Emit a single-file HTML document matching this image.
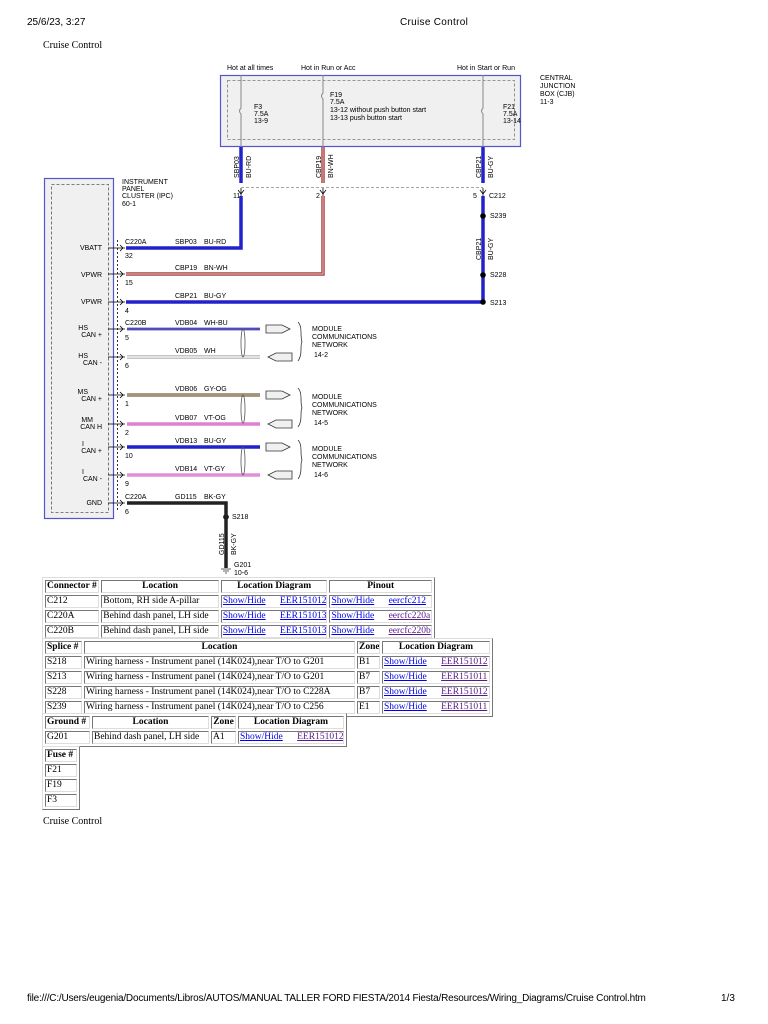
<!DOCTYPE html>
<html><head><meta charset="utf-8">
<style>
body{margin:0;width:768px;height:1024px;background:#fff;position:relative;overflow:hidden;font-family:"Liberation Sans",sans-serif;}
.a{position:absolute;white-space:nowrap;}
table{position:absolute;table-layout:fixed;border-collapse:separate;border-spacing:2px;border:1px solid #888;border-color:#ddd #777 #777 #ddd;font-family:"Liberation Serif",serif;font-size:9.5px;background:#fff;}
td,th{border:1px solid #888;border-color:#777 #ddd #ddd #777;padding:0 1px;height:11px;line-height:11px;white-space:nowrap;overflow:hidden;text-align:left;}
th{text-align:center;font-weight:bold;}
a{color:#00e;text-decoration:underline;}
a.v{color:#551a8b;}
.sp{margin-left:12px}
</style></head><body>
<div class="a" style="left:27px;top:17px;font-size:10px;">25/6/23, 3:27</div>
<div class="a" style="left:400px;top:17px;font-size:10px;letter-spacing:0.3px">Cruise Control</div>
<div class="a" style="left:43px;top:40px;font-size:10px;font-family:'Liberation Serif',serif">Cruise Control</div>

<svg class="a" style="left:0;top:0" width="768" height="580" font-family="Liberation Sans, sans-serif" font-size="7">
<rect x="220.5" y="75.5" width="300" height="71" fill="#f0f0f0" stroke="#5555cc" stroke-width="1.2"/>
<rect x="227.5" y="80.5" width="287" height="59" fill="none" stroke="#777" stroke-dasharray="3,2" stroke-width="0.8"/>
<text x="227" y="70">Hot at all times</text>
<text x="301" y="70">Hot in Run or Acc</text>
<text x="457" y="70">Hot in Start or Run</text>
<text x="540" y="80">CENTRAL</text><text x="540" y="88">JUNCTION</text><text x="540" y="96">BOX (CJB)</text><text x="540" y="104">11-3</text>
<g stroke="#888" stroke-width="1" fill="none">
<path d="M241 75V108 q-3 3 0 6 V147"/><path d="M323 75V93 q-3 3 0 6 V147"/><path d="M483 75V108 q-3 3 0 6 V147"/>
</g>
<text x="254" y="109">F3</text><text x="254" y="116">7.5A</text><text x="254" y="123">13-9</text>
<text x="330" y="97">F19</text><text x="330" y="104">7.5A</text><text x="330" y="112">13-12 without push button start</text><text x="330" y="120">13-13 push button start</text>
<text x="503" y="109">F21</text><text x="503" y="116">7.5A</text><text x="503" y="123">13-14</text>
<line x1="241" y1="187.5" x2="483" y2="187.5" stroke="#888" stroke-dasharray="3,2" stroke-width="0.8"/>
<path d="M241 147V183" stroke="#2222cc" stroke-width="3.5"/>
<path d="M323 147V183" stroke="#aa4444" stroke-width="3.5"/><path d="M323 147V183" stroke="#e0b0b0" stroke-width="1"/>
<path d="M483 147V183" stroke="#2222cc" stroke-width="3.5"/>
<g font-size="7">
<text transform="translate(239,178) rotate(-90)">SBP03</text><text transform="translate(251,178) rotate(-90)">BU-RD</text>
<text transform="translate(321,178) rotate(-90)">CBP19</text><text transform="translate(333,178) rotate(-90)">BN-WH</text>
<text transform="translate(481,178) rotate(-90)">CBP21</text><text transform="translate(493,178) rotate(-90)">BU-GY</text>
<text transform="translate(481,260) rotate(-90)">CBP21</text><text transform="translate(493,260) rotate(-90)">BU-GY</text>
</g>
<g stroke="#000" fill="none" stroke-width="0.8"><path d="M238 190l3 4 3-4M241 188v8"/><path d="M320 190l3 4 3-4M323 188v8"/><path d="M480 190l3 4 3-4M483 188v8"/></g>
<text x="233" y="198">11</text><text x="316" y="198">2</text><text x="473" y="198">5</text><text x="489" y="198">C212</text>
<rect x="44.5" y="178.5" width="69" height="340" fill="#f0f0f0" stroke="#5555cc" stroke-width="1.2"/>
<rect x="51.5" y="184.5" width="57" height="328" fill="none" stroke="#555" stroke-dasharray="3,2" stroke-width="0.8"/>
<line x1="117.5" y1="240" x2="117.5" y2="512" stroke="#000" stroke-dasharray="2,2" stroke-width="0.8"/>
<text x="122" y="184">INSTRUMENT</text><text x="122" y="191">PANEL</text><text x="122" y="198">CLUSTER (IPC)</text><text x="122" y="206">60-1</text>
<g text-anchor="end">
<text x="102" y="250">VBATT</text><text x="102" y="277">VPWR</text><text x="102" y="304">VPWR</text>
<text x="88" y="330">HS</text><text x="102" y="337">CAN +</text>
<text x="88" y="358">HS</text><text x="102" y="365">CAN -</text>
<text x="88" y="394">MS</text><text x="102" y="401">CAN +</text>
<text x="93" y="422">MM</text><text x="102" y="429">CAN H</text>
<text x="84" y="446">I</text><text x="102" y="453">CAN +</text>
<text x="84" y="474">I</text><text x="102" y="481">CAN -</text>
<text x="102" y="505">GND</text>
</g>
<g stroke="#000" fill="none" stroke-width="0.8">
<path d="M108 248h17M120 245l3 3-3 3"/><path d="M108 274h17M120 271l3 3-3 3"/><path d="M108 302h17M120 299l3 3-3 3"/>
<path d="M108 329h17M120 326l3 3-3 3"/><path d="M108 357h17M120 354l3 3-3 3"/><path d="M108 395h17M120 392l3 3-3 3"/>
<path d="M108 424h17M120 421l3 3-3 3"/><path d="M108 447h17M120 444l3 3-3 3"/><path d="M108 475h17M120 472l3 3-3 3"/>
<path d="M108 503h17M120 500l3 3-3 3"/>
</g>
<path d="M126 248H241V196" stroke="#2222cc" stroke-width="3.5" fill="none"/>
<path d="M126 274H323V196" stroke="#aa4444" stroke-width="3.5" fill="none"/><path d="M126 274H323V196" stroke="#e8c0c0" stroke-width="1" fill="none"/>
<path d="M126 302H483V196" stroke="#2222cc" stroke-width="3.5" fill="none"/>
<g fill="#000"><circle cx="483" cy="216" r="2.8"/><circle cx="483" cy="275" r="2.8"/><circle cx="483" cy="302" r="2.8"/><circle cx="226" cy="517" r="2.8"/></g>
<text x="490" y="218">S239</text><text x="490" y="277">S228</text><text x="490" y="305">S213</text>
<text x="125" y="244">C220A</text><text x="175" y="244">SBP03</text><text x="204" y="244">BU-RD</text><text x="125" y="258">32</text>
<text x="175" y="270">CBP19</text><text x="204" y="270">BN-WH</text><text x="125" y="285">15</text>
<text x="175" y="298">CBP21</text><text x="204" y="298">BU-GY</text><text x="125" y="313">4</text>
<path d="M127 329H260" stroke="#7777cc" stroke-width="3"/><path d="M127 329H260" stroke="#2222aa" stroke-width="1"/>
<path d="M127 357H260" stroke="#888" stroke-width="3"/><path d="M127 357H260" stroke="#fff" stroke-width="1.6"/>
<path d="M127 395H260" stroke="#8a7a60" stroke-width="3.5"/><path d="M127 395H260" stroke="#c0b090" stroke-width="1"/>
<path d="M127 424H260" stroke="#e080d0" stroke-width="3.5"/>
<path d="M127 447H260" stroke="#2222cc" stroke-width="3.5"/>
<path d="M127 475H260" stroke="#e090d8" stroke-width="3.5"/>
<path d="M127 503H226V568" stroke="#222" stroke-width="3.5" fill="none"/>
<g fill="none" stroke="#555" stroke-width="0.8">
<ellipse cx="243" cy="343" rx="2" ry="14"/><ellipse cx="243" cy="409" rx="2" ry="14"/><ellipse cx="243" cy="461" rx="2" ry="14"/>
</g>
<g stroke="#333" fill="#f0f0f0" stroke-width="0.8">
<path d="M266 325h16l8 4-8 4h-16z"/><path d="M292 353h-16l-8 4 8 4h16z"/>
<path d="M266 391h16l8 4-8 4h-16z"/><path d="M292 420h-16l-8 4 8 4h16z"/>
<path d="M266 443h16l8 4-8 4h-16z"/><path d="M292 471h-16l-8 4 8 4h16z"/>
</g>
<g stroke="#333" fill="none" stroke-width="0.8">
<path d="M298 322q3 3 3 10t1 10q-1 1-1 8t-3 11"/>
<path d="M298 388q3 3 3 10t1 10q-1 1-1 8t-3 11"/>
<path d="M298 440q3 3 3 10t1 10q-1 1-1 8t-3 11"/>
</g>
<g font-size="7">
<text x="312" y="331">MODULE</text><text x="312" y="339">COMMUNICATIONS</text><text x="312" y="347">NETWORK</text><text x="314" y="357">14-2</text>
<text x="312" y="399">MODULE</text><text x="312" y="407">COMMUNICATIONS</text><text x="312" y="415">NETWORK</text><text x="314" y="425">14-5</text>
<text x="312" y="451">MODULE</text><text x="312" y="459">COMMUNICATIONS</text><text x="312" y="467">NETWORK</text><text x="314" y="477">14-6</text>
<text x="125" y="325">C220B</text><text x="175" y="325">VDB04</text><text x="204" y="325">WH-BU</text><text x="125" y="340">5</text>
<text x="175" y="353">VDB05</text><text x="204" y="353">WH</text><text x="125" y="368">6</text>
<text x="175" y="391">VDB06</text><text x="204" y="391">GY-OG</text><text x="125" y="406">1</text>
<text x="175" y="420">VDB07</text><text x="204" y="420">VT-OG</text><text x="125" y="435">2</text>
<text x="175" y="443">VDB13</text><text x="204" y="443">BU-GY</text><text x="125" y="458">10</text>
<text x="175" y="471">VDB14</text><text x="204" y="471">VT-GY</text><text x="125" y="486">9</text>
<text x="125" y="499">C220A</text><text x="175" y="499">GD115</text><text x="204" y="499">BK-GY</text><text x="125" y="514">6</text>
<text x="232" y="519">S218</text>
<text transform="translate(224,555) rotate(-90)">GD115</text><text transform="translate(236,555) rotate(-90)">BK-GY</text>
<text x="234" y="567">G201</text><text x="234" y="575">10-6</text>
</g>
<g stroke="#333" stroke-width="0.8"><path d="M221 569h10M223 571h6M225 573h2"/></g>
</svg>

<table style="left:42px;top:577px;width:393px">
<tr><th style="width:50px;text-align:left">Connector #</th><th style="width:113px">Location</th><th style="width:102px">Location Diagram</th><th style="width:98px">Pinout</th></tr>
<tr><td>C212</td><td>Bottom, RH side A-pillar</td><td><a>Show/Hide</a> <a class="sp">EER151012</a></td><td><a>Show/Hide</a> <a class="sp">eercfc212</a></td></tr>
<tr><td>C220A</td><td>Behind dash panel, LH side</td><td><a>Show/Hide</a> <a class="sp">EER151013</a></td><td><a>Show/Hide</a> <a class="sp v">eercfc220a</a></td></tr>
<tr><td>C220B</td><td>Behind dash panel, LH side</td><td><a>Show/Hide</a> <a class="sp">EER151013</a></td><td><a>Show/Hide</a> <a class="sp v">eercfc220b</a></td></tr>
</table>
<table style="left:42px;top:638px;width:449px">
<tr><th style="width:33px;text-align:left">Splice #</th><th style="width:267px">Location</th><th style="width:19px">Zone</th><th style="width:104px">Location Diagram</th></tr>
<tr><td>S218</td><td>Wiring harness - Instrument panel (14K024),near T/O to G201</td><td>B1</td><td><a>Show/Hide</a> <a class="sp v">EER151012</a></td></tr>
<tr><td>S213</td><td>Wiring harness - Instrument panel (14K024),near T/O to G201</td><td>B7</td><td><a>Show/Hide</a> <a class="sp v">EER151011</a></td></tr>
<tr><td>S228</td><td>Wiring harness - Instrument panel (14K024),near T/O to C228A</td><td>B7</td><td><a>Show/Hide</a> <a class="sp v">EER151012</a></td></tr>
<tr><td>S239</td><td>Wiring harness - Instrument panel (14K024),near T/O to C256</td><td>E1</td><td><a>Show/Hide</a> <a class="sp v">EER151011</a></td></tr>
</table>
<table style="left:42px;top:713px;width:303px">
<tr><th style="width:41px;text-align:left">Ground #</th><th style="width:113px">Location</th><th style="width:21px">Zone</th><th style="width:102px">Location Diagram</th></tr>
<tr><td>G201</td><td>Behind dash panel, LH side</td><td>A1</td><td><a>Show/Hide</a> <a class="sp v">EER151012</a></td></tr>
</table>
<table style="left:42px;top:746px;width:36px">
<tr><th style="width:28px;text-align:left">Fuse #</th></tr>
<tr><td>F21</td></tr><tr><td>F19</td></tr><tr><td>F3</td></tr>
</table>
<div class="a" style="left:43px;top:816px;font-size:10px;font-family:'Liberation Serif',serif">Cruise Control</div>
<div class="a" style="left:27px;top:993px;font-size:10px;letter-spacing:-0.2px">file:///C:/Users/eugenia/Documents/Libros/AUTOS/MANUAL TALLER FORD FIESTA/2014 Fiesta/Resources/Wiring_Diagrams/Cruise Control.htm</div>
<div class="a" style="left:721px;top:993px;font-size:10px">1/3</div>
</body></html>
